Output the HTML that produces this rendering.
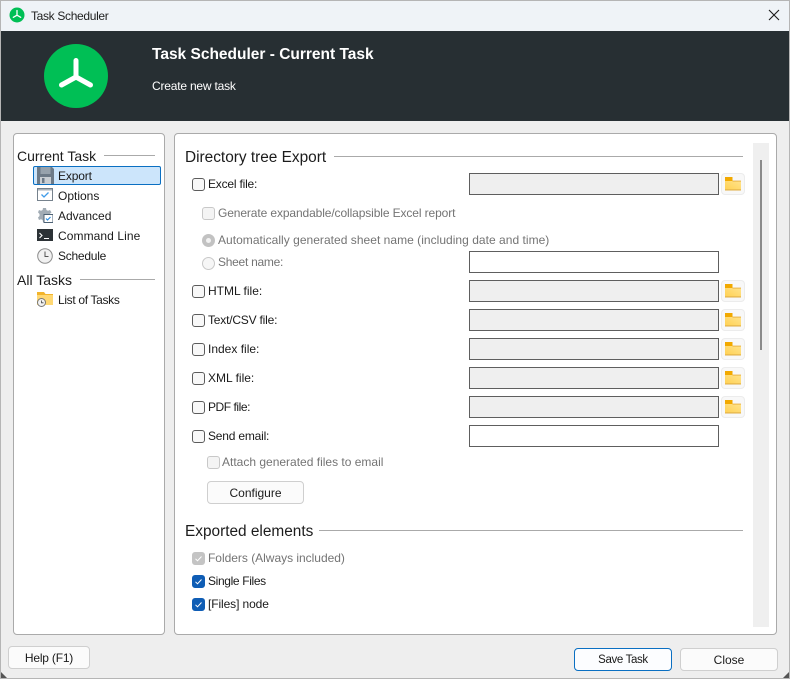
<!DOCTYPE html>
<html><head><meta charset="utf-8"><style>
html,body{margin:0;padding:0;width:790px;height:679px;overflow:hidden;background:#eee}
body{font-family:"Liberation Sans",sans-serif;font-size:12px;color:#1a1a1a;position:relative}
.a,.t,.cb,.in,.fb,.btn,.hl,.h{position:absolute;box-sizing:border-box}
.t{white-space:nowrap;line-height:16px;height:16px;margin-top:-1px}
.n{margin-top:0}
.g{color:#747474}
.hd{font-size:15.4px;margin-top:0;color:#1c1c1c}
.hs{font-size:14px;margin-top:0;color:#1c1c1c}
.hl{height:1px;background:#aaa}
.cb{width:13px;height:13px;border:1px solid #5c5c5c;border-radius:3px;background:#f8f8f8}
.cb.dis{border-color:#c8c8c8;background:#f4f4f4}
.cb.on{background:#0f5db5;border-color:#0f5db5}
.cb.ong{background:#c4c4c4;border-color:#c4c4c4}
.cb svg{position:absolute;left:0;top:0}
.in{left:469px;width:250px;height:22px;border:1px solid #5e5e5e;background:#efefef}
.in.w{background:#fff}
.fb{left:721px;width:24px;height:22px;border:1px solid #ececec;border-radius:4px;background:#f8f8f8}
.fb svg{position:absolute;left:3px;top:3px}
.btn{background:#fbfbfb;border:1px solid #cfcfcf;border-radius:4px;text-align:center;line-height:22px;height:23px;color:#1a1a1a}
.r{width:13px;height:13px;border-radius:50%;position:absolute;box-sizing:border-box}
</style></head><body>
<svg width="0" height="0" style="position:absolute"><defs>
<linearGradient id="fg" x1="1" y1="0" x2="0" y2="1"><stop offset="0" stop-color="#ffe38c"/><stop offset="1" stop-color="#ffd050"/></linearGradient>
<symbol id="fo" viewBox="0 0 17 14"><rect x="0" y="0" width="7.5" height="5" fill="#f2a900"/><rect x="0" y="4" width="16" height="9.5" fill="url(#fg)"/><rect x="7.5" y="3.6" width="8.5" height="1" fill="#e8b447"/><rect x="0" y="12.4" width="16" height="1.1" fill="#dfae45"/></symbol>
<symbol id="ck" viewBox="0 0 11 11"><path d="M2.5 5.8l2 2 4-4.3" fill="none" stroke="#fff" stroke-width="1"/></symbol>
</defs></svg>

<!-- window frame -->
<div class="a" style="left:0;top:0;width:790px;height:31px;background:#eff3f7;border-top:1px solid #b5b5b5"></div>
<div class="a" style="left:0;top:0;width:1px;height:679px;background:#b5b5b5"></div>
<div class="a" style="left:789px;top:0;width:1px;height:679px;background:#b5b5b5"></div>
<div class="a" style="left:0;top:678px;width:790px;height:1px;background:#b5b5b5"></div>
<svg class="a" style="left:1px;top:672px" width="6" height="6" viewBox="0 0 6 6"><path d="M0 0l6 6H0z" fill="#555"/></svg>
<svg class="a" style="left:783px;top:672px" width="6" height="6" viewBox="0 0 6 6"><path d="M6 0L0 6h6z" fill="#555"/></svg>

<svg class="a" style="left:9px;top:7px" width="16" height="16" viewBox="0 0 16 16"><circle cx="8" cy="8" r="7.5" fill="#00bf55"/><path d="M8 3.5V8.2L4.3 10.3M8 8.2l3.7 2.1" fill="none" stroke="#fff" stroke-width="1.3" stroke-linecap="round"/></svg>
<div class="t" style="left:31px;top:9px;letter-spacing:-.33px;color:#222">Task Scheduler</div>
<svg class="a" style="left:768px;top:9px" width="12" height="12" viewBox="0 0 12 12"><path d="M1 1l10 10M11 1L1 11" stroke="#1a1a1a" stroke-width="1.1" fill="none"/></svg>

<!-- header -->
<div class="a" style="left:1px;top:31px;width:788px;height:90px;background:#272f33"></div>
<svg class="a" style="left:44px;top:44px" width="64" height="64" viewBox="0 0 64 64"><circle cx="32" cy="32" r="32" fill="#00bf55"/><path d="M32 16.5V33L17.5 41M32 33l14.5 8" fill="none" stroke="#fff" stroke-width="5" stroke-linecap="round" stroke-linejoin="round"/></svg>
<div class="t" style="left:152px;top:47px;color:#fff;font-weight:bold;font-size:15.5px;line-height:18px;height:18px">Task Scheduler - Current Task</div>
<div class="t n" style="left:152px;top:78px;color:#fff;letter-spacing:-.2px">Create new task</div>

<!-- left panel -->
<div class="a" style="left:13px;top:133px;width:152px;height:502px;background:#fff;border:1px solid #aaa;border-radius:4px"></div>
<div class="t hs" style="left:17px;top:148px">Current Task</div>
<div class="hl" style="left:104px;top:155px;width:51px"></div>
<div class="a" style="left:33px;top:166px;width:128px;height:19px;background:#cce5fb;border:1px solid #0a6fc2;border-radius:2px"></div>

<svg class="a" style="left:37px;top:167px" width="17" height="17" viewBox="0 0 17 17"><path d="M0 0h15l2 2v15H0z" fill="#6d7a87"/><rect x="3.5" y="0" width="10" height="7" fill="#97a2ac"/><rect x="3" y="10" width="11" height="7" fill="#c9ced3"/><rect x="5" y="11" width="2.5" height="5" fill="#6d7a87"/></svg>
<div class="t n" style="left:58px;top:168px;letter-spacing:-.15px">Export</div>

<svg class="a" style="left:37px;top:188px" width="16" height="13" viewBox="0 0 16 13"><rect x=".5" y=".5" width="15" height="12" fill="#fff" stroke="#76828d"/><rect x="1" y="1" width="14" height="1.5" fill="#a9b2ba"/><path d="M4.5 6.5l2.5 2.5 4.5-4.5" fill="none" stroke="#3f9be8" stroke-width="1.3"/></svg>
<div class="t n" style="left:58px;top:188px">Options</div>

<svg class="a" style="left:38px;top:208px" width="15" height="15" viewBox="0 0 15 15"><path d="M5 0h3l.4 2 1.6.8L12 2l1.5 2.4-1.5 1.4V8l1.5 1.4L12 12l-2-.8-1.6.8L8 14H5l-.4-2-1.6-.8-2 .8L0 9.5 1.5 8V6L0 4.4 1 2l2 .8L4.6 2z" fill="#a2acb5"/><rect x="6" y="6.5" width="9" height="8" fill="#fff" stroke="#4d6275" stroke-width="1"/><path d="M8 10.5l1.5 1.5 3-3" fill="none" stroke="#2f8fe0" stroke-width="1.2"/></svg>
<div class="t n" style="left:58px;top:208px">Advanced</div>

<svg class="a" style="left:37px;top:229px" width="16" height="12" viewBox="0 0 16 12"><rect width="16" height="12" fill="#2c3236"/><path d="M2.5 4l2.5 2.5L2.5 9" fill="none" stroke="#fff" stroke-width="1.1"/><path d="M7 9.5h5" stroke="#fff" stroke-width="1"/></svg>
<div class="t n" style="left:58px;top:228px;letter-spacing:.08px">Command Line</div>

<svg class="a" style="left:37px;top:248px" width="16" height="16" viewBox="0 0 16 16"><circle cx="8" cy="8" r="7.3" fill="#f1f1f1" stroke="#8d8d8d"/><path d="M8 3.5V8.5H11.5" fill="none" stroke="#555" stroke-width="1"/></svg>
<div class="t n" style="left:58px;top:248px;letter-spacing:-.25px">Schedule</div>

<div class="t hs" style="left:17px;top:272px">All Tasks</div>
<div class="hl" style="left:80px;top:279px;width:75px"></div>
<svg class="a" style="left:37px;top:292px" width="17" height="15" viewBox="0 0 17 15"><path d="M0 0h7l1.5 2H16v11H0z" fill="#f2b42c"/><rect x="0" y="3" width="16" height="10" fill="#ffd873"/><circle cx="4.5" cy="10.5" r="4" fill="#f2f2f2" stroke="#777"/><path d="M4.5 8.5v2.3h2" fill="none" stroke="#444" stroke-width=".8"/></svg>
<div class="t n" style="left:58px;top:292px;letter-spacing:-.33px">List of Tasks</div>

<!-- right panel -->
<div class="a" style="left:174px;top:133px;width:603px;height:502px;background:#fff;border:1px solid #aaa;border-radius:4px"></div>
<div class="a" style="left:753px;top:143px;width:16px;height:484px;background:#efefef"></div>
<div class="a" style="left:760px;top:160px;width:2px;height:190px;background:#8a8a8a"></div>

<div class="t hd" style="left:185px;top:150px">Directory tree Export</div>
<div class="hl" style="left:334px;top:156px;width:409px"></div>

<div class="cb" style="left:192px;top:178px"></div><div class="t" style="left:208px;top:177px;letter-spacing:-.2px">Excel file:</div>
<div class="in" style="top:173px"></div>
<div class="fb" style="top:173px"><svg width="17" height="14"><use href="#fo"/></svg></div>

<div class="cb dis" style="left:202px;top:207px"></div><div class="t g" style="left:218px;top:206px;letter-spacing:-.11px">Generate expandable/collapsible Excel report</div>

<div class="r" style="left:202px;top:234px;background:#c2c2c2"><div class="a" style="left:4px;top:4px;width:5px;height:5px;background:#f2f2f2;border-radius:50%"></div></div>
<div class="t g n" style="left:218px;top:232px;letter-spacing:.03px">Automatically generated sheet name (including date and time)</div>
<div class="r" style="left:202px;top:257px;background:#f6f6f6;border:1px solid #c8c8c8"></div>
<div class="t g" style="left:218px;top:255px;letter-spacing:-.27px">Sheet name:</div>
<div class="in w" style="top:251px"></div>

<div class="cb" style="left:192px;top:285px"></div><div class="t" style="left:208px;top:284px">HTML file:</div>
<div class="in" style="top:280px"></div><div class="fb" style="top:280px"><svg width="17" height="14"><use href="#fo"/></svg></div>

<div class="cb" style="left:192px;top:314px"></div><div class="t" style="left:208px;top:313px;letter-spacing:-.2px">Text/CSV file:</div>
<div class="in" style="top:309px"></div><div class="fb" style="top:309px"><svg width="17" height="14"><use href="#fo"/></svg></div>

<div class="cb" style="left:192px;top:343px"></div><div class="t" style="left:208px;top:342px">Index file:</div>
<div class="in" style="top:338px"></div><div class="fb" style="top:338px"><svg width="17" height="14"><use href="#fo"/></svg></div>

<div class="cb" style="left:192px;top:372px"></div><div class="t" style="left:208px;top:371px">XML file:</div>
<div class="in" style="top:367px"></div><div class="fb" style="top:367px"><svg width="17" height="14"><use href="#fo"/></svg></div>

<div class="cb" style="left:192px;top:401px"></div><div class="t" style="left:208px;top:400px;letter-spacing:-.45px">PDF file:</div>
<div class="in" style="top:396px"></div><div class="fb" style="top:396px"><svg width="17" height="14"><use href="#fo"/></svg></div>

<div class="cb" style="left:192px;top:430px"></div><div class="t" style="left:208px;top:429px;letter-spacing:-.2px">Send email:</div>
<div class="in w" style="top:425px"></div>

<div class="cb dis" style="left:207px;top:456px"></div><div class="t g" style="left:222px;top:455px">Attach generated files to email</div>

<div class="btn" style="left:207px;top:481px;width:97px">Configure</div>

<div class="t hd" style="left:185px;top:524px">Exported elements</div>
<div class="hl" style="left:319px;top:530px;width:424px"></div>

<div class="cb ong" style="left:192px;top:552px"><svg width="11" height="11"><use href="#ck"/></svg></div><div class="t g" style="left:208px;top:551px;letter-spacing:-.02px">Folders (Always included)</div>
<div class="cb on" style="left:192px;top:575px"><svg width="11" height="11"><use href="#ck"/></svg></div><div class="t" style="left:208px;top:574px;letter-spacing:-.35px">Single Files</div>
<div class="cb on" style="left:192px;top:598px"><svg width="11" height="11"><use href="#ck"/></svg></div><div class="t" style="left:208px;top:597px;letter-spacing:-.1px">[Files] node</div>

<!-- bottom buttons -->
<div class="btn" style="left:8px;top:646px;width:82px;letter-spacing:-.2px">Help (F1)</div>
<div class="btn" style="left:574px;top:648px;width:98px;border-color:#0a6fc2;background:#fcfdff;font-size:11.5px;letter-spacing:-.35px">Save Task</div>
<div class="btn" style="left:680px;top:648px;width:98px">Close</div>
</body></html>
